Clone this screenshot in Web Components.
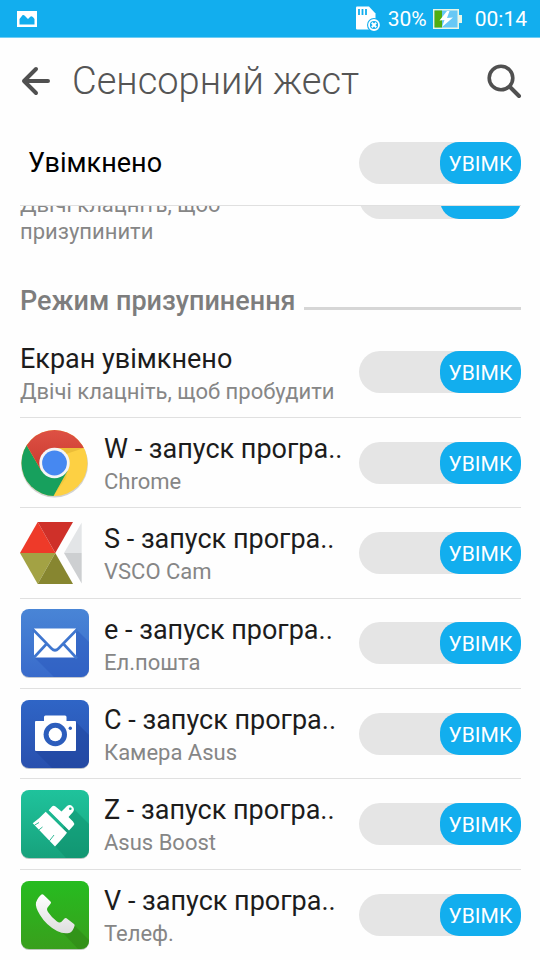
<!DOCTYPE html>
<html lang="uk">
<head>
<meta charset="utf-8">
<meta name="viewport" content="width=device-width, initial-scale=1">
<title>Сенсорний жест</title>
<style>
  body {
    margin: 0;
    min-height: 100vh;
    display: flex;
    flex-direction: column;
    background: #fefefe;
    color: #1c1c1c;
    font-family: Roboto, 'Noto Sans', sans-serif;
    --accent: #12aeee;
    --line: #e0e0e0;
    --muted: #868686;
  }
  main {
    flex: 1;
    display: flex;
    flex-direction: column;
  }
  gesture-list {
    flex: 1;
  }
</style>
</head>
<body>
<status-bar battery="30%" time="00:14"></status-bar>
<app-header>Сенсорний жест</app-header>
<master-switch>Увімкнено</master-switch>
<main>
  <gesture-row class="under" subtitle="Двічі клацніть, щоб призупинити"></gesture-row>
  <section-title>Режим призупинення</section-title>
  <gesture-row name="Екран увімкнено" subtitle="Двічі клацніть, щоб пробудити"></gesture-row>
  <gesture-list>
    <gesture-row name="W - запуск програ.." subtitle="Chrome">
      <svg slot="icon" viewBox="0 0 70 70" aria-hidden="true">
        <defs>
          <clipPath id="disc"><circle cx="34.5" cy="35" r="33"/></clipPath>
          <linearGradient id="redShade" x1="0" y1="0" x2="0" y2="1"><stop offset="0" stop-color="#df5245"/><stop offset="1" stop-color="#c93a2f"/></linearGradient>
        </defs>
        <circle cx="34.5" cy="36" r="33.5" fill="#d2d2d2"/>
        <g clip-path="url(#disc)">
          <rect width="70" height="70" fill="#fdd043"/>
          <path d="M0 6 7.3 18.5 21.5 43l26 0L33.5 68 30 70H0z" fill="#17a05d"/>
          <path d="M0 0H70V20H34.5L21.5 43 7.3 18.5 0 6z" fill="url(#redShade)"/>
          <path d="M34.5 20H64L46 26z" fill="#d8a72c" opacity=".45"/>
          <path d="M47.5 43 33.5 68 46 50z" fill="#d6b330" opacity=".3"/>
        </g>
        <circle cx="34.5" cy="35" r="15.2" fill="#f5f5f5"/>
        <circle cx="34.5" cy="35" r="12.4" fill="#4688f1"/>
      </svg>
    </gesture-row>
    <gesture-row name="S - запуск програ.." subtitle="VSCO Cam">
      <svg slot="icon" viewBox="0 0 70 70" aria-hidden="true">
        <path d="M17.7 4 35.3 35H0z" fill="#ee3a29"/>
        <path d="M17.7 4H53L35.3 35z" fill="#cf3029"/>
        <path d="M0 35H35.3L17.7 66z" fill="#a3a244"/>
        <path d="M35.3 35 53 66H17.7z" fill="#878630"/>
        <path d="M61.7 4.5V35H44z" fill="#e3e5e7"/>
        <path d="M44 35H61.7V65.500z" fill="#cdcfd1"/>
      </svg>
    </gesture-row>
    <gesture-row name="e - запуск програ.." subtitle="Ел.пошта">
      <svg slot="icon" viewBox="0 0 70 70" aria-hidden="true">
        <defs><linearGradient id="mailBg" x1="0" y1="0" x2="0" y2="1"><stop offset="0" stop-color="#4985d6"/><stop offset="1" stop-color="#396bcb"/></linearGradient></defs>
        <rect x="1" y="2" width="68" height="68" rx="8" fill="#c3c8d1"/>
        <rect x="1" y="1" width="68" height="68" rx="8" fill="url(#mailBg)"/>
        <path d="M56 21 69 34V61a8 8 0 0 1-8 8H34L14 49z" fill="#2956bd" opacity=".45"/>
        <path d="M14 20.500H56V49.500H14z" fill="#fff"/>
        <path d="M13 21.500 31.500 40.500q3.500 3.500 7 0L57 21.500M13 50.500 26 36.500M57 50.500 44 36.500" fill="none" stroke="#3f76cf" stroke-width="2.600"/>
      </svg>
    </gesture-row>
    <gesture-row name="C - запуск програ.." subtitle="Камера Asus">
      <svg slot="icon" viewBox="0 0 70 70" aria-hidden="true">
        <defs><linearGradient id="camBg" x1="0" y1="0" x2="0" y2="1"><stop offset="0" stop-color="#2f65c6"/><stop offset="1" stop-color="#2950ae"/></linearGradient></defs>
        <rect x="1" y="2" width="68" height="68" rx="8" fill="#b9bfca"/>
        <rect x="1" y="1" width="68" height="68" rx="8" fill="url(#camBg)"/>
        <path d="M56 23 69 36V61a8 8 0 0 1-8 8H32L15 52z" fill="#1d4096" opacity=".45"/>
        <path d="M15 23q0-1 1-1h8v-4q0-1.500 1.500-1.500h19.500q1.500 0 1.500 1.500v4H55q1 0 1 1V51q0 1-1 1H16q-1 0-1-1z" fill="#fff"/>
        <circle cx="35.300" cy="35.500" r="11.700" fill="#2c5dbc"/>
        <circle cx="35.300" cy="35.500" r="6.700" fill="#fff"/>
        <circle cx="50.300" cy="29.300" r="1.700" fill="#2c5dbc"/>
      </svg>
    </gesture-row>
    <gesture-row name="Z - запуск програ.." subtitle="Asus Boost">
      <svg slot="icon" viewBox="0 0 70 70" aria-hidden="true">
        <defs><linearGradient id="boostBg" x1="0" y1="0" x2="0" y2="1"><stop offset="0" stop-color="#1fc39c"/><stop offset="1" stop-color="#17a27c"/></linearGradient></defs>
        <rect x="1" y="2" width="68" height="68" rx="8" fill="#b9c5c1"/>
        <rect x="1" y="1" width="68" height="68" rx="8" fill="url(#boostBg)"/>
        <path d="M53 19 69 35V61a8 8 0 0 1-8 8H46L35 57z" fill="#0b8765" opacity=".4"/>
        <path d="M25.700 22.800 47 43.800Q43 49 35 57.500L12.700 34.300Q20 29 25.700 22.800z" fill="#fff"/>
        <path d="M28.700 21.200 32 17.500Q33.500 16 35.500 17.500L41.500 22.500 47 17a4.300 4.300 0 0 1 6 6L48.500 28 53 32.500q2 2 .5 4L49 41.500z" fill="#fff"/>
        <circle cx="50.300" cy="19.700" r="1.300" fill="#1bb28b"/>
        <path d="M14.500 36.200 19 33.500M19 40.800 22.500 38M29.500 51.800 34 46" stroke="#1bb28b" stroke-width=".9"/>
      </svg>
    </gesture-row>
    <gesture-row name="V - запуск програ.." subtitle="Телеф.">
      <svg slot="icon" viewBox="0 0 70 70" aria-hidden="true">
        <defs>
          <linearGradient id="phoneBg" x1="0" y1="0" x2="0" y2="1"><stop offset="0" stop-color="#26bc20"/><stop offset="1" stop-color="#399f1c"/></linearGradient>
          <linearGradient id="handset" x1="0" y1="0" x2="0" y2="1"><stop offset="0" stop-color="#fff"/><stop offset="1" stop-color="#dedede"/></linearGradient>
        </defs>
        <rect x="1" y="2" width="68" height="68" rx="8" fill="#bcc8ba"/>
        <rect x="1" y="1" width="68" height="68" rx="8" fill="url(#phoneBg)"/>
        <path d="M54 45 69 60V61a8 8 0 0 1-8 8H58L43 53z" fill="#2d7a14" opacity=".4"/>
        <path d="M16 22.500Q18 17 21.500 14.500q1-.7 2 .3L30.500 21.500q1 1 .2 2L28 27q-2 2 0 5Q32 38 37 41.500q2.500 2 4.500.3L44.500 38.500q1-1 2-.2L54 44q1 1 .5 2Q53 51 50 52.700 44 54.500 37 51 26 45 20 35 15 27 16 22.500z" fill="url(#handset)"/>
      </svg>
    </gesture-row>
  </gesture-list>
</main>

<script>
class StatusBar extends HTMLElement {
    connectedCallback() {
        this.attachShadow({ mode: 'open' }).innerHTML = `
<style>
  :host {
    display: flex;
    align-items: center;
    height: 37px;
    padding: 0 13px 0 17px;
    border-bottom: 1px solid #6fcdf4;
    background: var(--accent);
    color: white;
    font-size: 21px;
    line-height: 24px;
  }
  svg { display: block; }
  .photo { margin-right: auto; }
  .sd { margin-right: 7px; }
  .battery { margin: 0 12px 0 6px; }
</style>
<svg class="photo" width="20" height="16" viewBox="0 0 20 16"><path fill="#fff" fill-rule="evenodd" d="M0 0H20V16H0zM2.500 13.500H17.500V8Q15 4 13 6L11 8 8 5Q6 3 4.500 5.500L2.500 8z"/></svg>
<svg class="sd" width="25" height="25" viewBox="0 0 25 25">
  <path fill="#fff" d="M1 0.500H13L19.500 7.500V23.500H1q-1 0-1-1V1.500q0-1 1-1z"/>
  <path d="M3 3V9M6.500 3V9M10 3V9" stroke="#12aeee" stroke-width="1.800"/>
  <circle cx="18" cy="19" r="7" fill="#12aeee"/>
  <circle cx="18" cy="19" r="5" fill="none" stroke="#fff" stroke-width="1.800"/>
  <path d="M15.800 16.800l4.400 4.400m0-4.400l-4.400 4.400" stroke="#fff" stroke-width="2"/>
</svg>
<span>${this.getAttribute('battery')}</span>
<svg class="battery" width="30" height="20" viewBox="0 0 30 20">
  <path fill="#e9f6e8" d="M0 0H26V6H29V14H26V20H0z"/>
  <path fill="#67c8f5" d="M1.500 1.500H24.500V18.500H1.500z"/>
  <path fill="#4fae10" d="M1.500 1.500H9V18.500H1.500z"/>
  <path fill="#fff" d="M14 2 6.500 11.500 11.500 11 9 18 20 8.500 14 9 16.500 2z"/>
</svg>
<span>${this.getAttribute('time')}</span>`;
    }
}

class AppHeader extends HTMLElement {
    connectedCallback() {
        this.attachShadow({ mode: 'open' }).innerHTML = `
<style>
  :host {
    display: flex;
    align-items: center;
    box-sizing: border-box;
    height: 83px;
    padding: 2px 18px 0 20px;
    color: #555;
  }
  button {
    display: block;
    padding: 0;
    border: 0;
    background: none;
    color: inherit;
    cursor: pointer;
  }
  svg { display: block; }
  h1 {
    flex: 1;
    margin: 0 0 0 20px;
    font-size: 38px;
    font-weight: 300;
    line-height: 44px;
  }
</style>
<button aria-label="Назад"><svg width="32" height="32" viewBox="0 0 32 32" fill="none" stroke="#505050" stroke-width="4" stroke-linecap="round" stroke-linejoin="round"><path d="M28 16H4M16 4 4 16 16 28"/></svg></button>
<h1><slot></slot></h1>
<button aria-label="Пошук"><svg width="36" height="36" viewBox="0 0 36 36" fill="none" stroke="#505050"><circle cx="15" cy="15" r="11.800" stroke-width="3.600"/><path d="M24 24 33 33" stroke-width="4" stroke-linecap="round"/></svg></button>`;
    }
}

class ToggleSwitch extends HTMLElement {
    connectedCallback() {
        this.attachShadow({ mode: 'open' }).innerHTML = `
<style>
  :host { display: block; flex: none; }
  label {
    display: grid;
    width: 162px;
    height: 42px;
    cursor: pointer;
  }
  input, span { grid-area: 1 / 1; }
  input {
    appearance: none;
    margin: 0;
    border-radius: 21px;
    background: #e5e5e5;
  }
  span {
    justify-self: start;
    width: 81px;
    height: 42px;
    border-radius: 19px;
    background: #aaa;
    color: white;
    font-size: 21px;
    line-height: 45px;
    text-align: center;
  }
  input:checked + span {
    justify-self: end;
    background: var(--accent);
  }
</style>
<label><input type="checkbox" role="switch" checked><span>УВІМК</span></label>`;
        this.shadowRoot
            .querySelector('input')
            .setAttribute('aria-label', this.getAttribute('label') || '');
    }
}

class MasterSwitch extends HTMLElement {
    connectedCallback() {
        this.attachShadow({ mode: 'open' }).innerHTML = `
<style>
  :host {
    position: relative;
    z-index: 1;
    display: block;
    padding: 0 19px 0 20px;
    background: #fefefe;
  }
  div {
    display: flex;
    align-items: center;
    justify-content: space-between;
    height: 84px;
    padding-left: 8px;
    border-bottom: 1px solid var(--line);
    color: black;
    font-size: 27px;
    line-height: 32px;
  }
</style>
<div><slot></slot><toggle-switch label="${this.textContent}"></toggle-switch></div>`;
    }
}

class SectionTitle extends HTMLElement {
    connectedCallback() {
        this.attachShadow({ mode: 'open' }).innerHTML = `
<style>
  :host {
    display: flex;
    align-items: center;
    gap: 8px;
    padding: 40px 19px 10px 20px;
    color: #7d7d7d;
  }
  h2 {
    margin: 0;
    font-size: 27px;
    font-weight: 500;
    line-height: 32px;
  }
  i {
    flex: 1;
    height: 3px;
    margin-top: 14px;
    background: #d6d6d6;
  }
</style>
<h2><slot></slot></h2><i></i>`;
    }
}

class GestureRow extends HTMLElement {
    connectedCallback() {
        const name = this.getAttribute('name');
        const subtitle = this.getAttribute('subtitle');
        this.attachShadow({ mode: 'open' }).innerHTML = `
<style>
  :host {
    display: flex;
    align-items: center;
    gap: 14px;
    box-sizing: border-box;
    min-height: 91px;
    margin: 0 19px 0 20px;
    border-bottom: 1px solid var(--line);
  }
  /* scrolled partly below the master switch */
  :host(.under) {
    align-items: flex-start;
    min-height: 0;
    margin-top: -29px;
    border: 0;
  }
  :host(.under) .text { padding-top: 14px; }
  :host(:last-child) { border: 0; }
  ::slotted(svg) {
    flex: none;
    width: 70px;
    height: 70px;
  }
  .text { flex: 1; }
  strong, span { display: block; }
  strong {
    font-size: 27px;
    font-weight: 400;
    line-height: 38px;
    white-space: nowrap;
  }
  span {
    color: var(--muted);
    font-size: 22px;
    line-height: 27px;
  }
</style>
<slot name="icon"></slot>
<div class="text">
  ${name ? `<strong>${name}</strong>` : ''}
  <span>${subtitle}</span>
</div>
<toggle-switch label="${name || subtitle}"></toggle-switch>`;
    }
}

class GestureList extends HTMLElement {
    connectedCallback() {
        this.attachShadow({ mode: 'open' }).innerHTML = `
<style>
  :host {
    display: grid;
    grid-auto-rows: 1fr;
  }
  ::slotted(gesture-row) { min-height: 90px; }
</style>
<slot></slot>`;
    }
}

customElements.define('status-bar', StatusBar);
customElements.define('app-header', AppHeader);
customElements.define('toggle-switch', ToggleSwitch);
customElements.define('master-switch', MasterSwitch);
customElements.define('section-title', SectionTitle);
customElements.define('gesture-row', GestureRow);
customElements.define('gesture-list', GestureList);
</script>
</body>
</html>
